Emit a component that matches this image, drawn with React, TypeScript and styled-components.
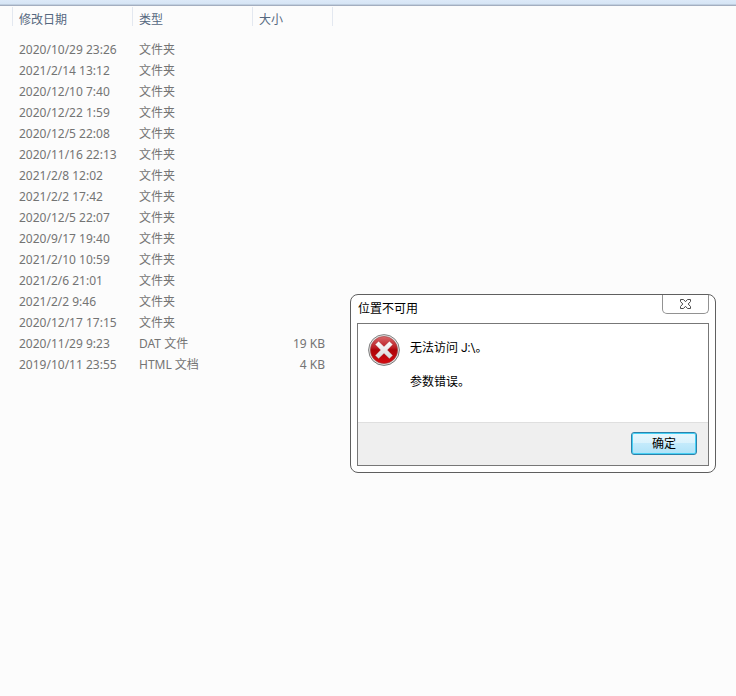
import React from "react";
import styled, { createGlobalStyle } from "styled-components";

const GlobalStyle = createGlobalStyle`
  * { box-sizing: border-box; }
  body {
    margin: 0;
    background: #fcfcfc;
    font-family: "Noto Sans", "Noto Sans CJK SC", sans-serif;
    font-size: 12px;
  }
`;

const Page = styled.div`
  position: relative;
  min-height: 100vh;
  background: #fcfcfc;
`;

const CommandBarEdge = styled.div`
  height: 6px;
  background: linear-gradient(#dce9f8, #d6e5f5 4px, #c0cfe0 4px, #c0cfe0 5px, #a3aec0 5px);
`;

const ListArea = styled.main`
  padding: 1px 0 0 12px;
`;

const FileTable = styled.table`
  width: 321px;
  table-layout: fixed;
  border-collapse: separate;
  border-spacing: 0;
  color: #747474;

  tbody::before {
    content: "";
    display: block;
    height: 13px;
  }
`;

const HeaderCell = styled.th<{ $width: number; $last?: boolean }>`
  width: ${(p) => p.$width}px;
  height: 19px;
  padding: 4px 6px 0;
  border-left: 1px solid #e3e8f0;
  border-right: ${(p) => (p.$last ? "1px solid #e3e8f0" : "0")};
  color: #56687f;
  font-weight: 400;
  line-height: 15px;
  text-align: left;
  vertical-align: bottom;

  span {
    display: block;
    height: 14px;
  }
`;

const Cell = styled.td<{ $align?: "right" }>`
  height: 21px;
  padding: 0 8px 0 7px;
  line-height: 21px;
  text-align: ${(p) => p.$align ?? "left"};
  white-space: nowrap;
`;

const Dialog = styled.section`
  position: absolute;
  top: 294px;
  left: 350px;
  right: 20px;
  min-width: 240px;
  padding: 0 6px 6px;
  border: 1px solid #5f5f5f;
  border-radius: 8px;
  background: #fff;
  color: #000;
  font-family: Roboto, "Noto Sans CJK SC", sans-serif;
`;

const TitleBar = styled.header`
  display: flex;
  justify-content: space-between;
  align-items: flex-start;
  height: 28px;
`;

const Title = styled.h1`
  margin: 0;
  padding: 0 1px;
  font-size: 12px;
  font-weight: 400;
  line-height: 28px;
`;

const CloseButton = styled.button`
  display: flex;
  align-items: center;
  justify-content: center;
  width: 47px;
  height: 19px;
  padding: 0;
  border: 1px solid #929292;
  border-top: 0;
  border-radius: 0 0 5px 5px;
  background: #fff;
`;

const Panel = styled.div`
  border: 1px solid #777;
`;

const Message = styled.div`
  display: flex;
  gap: 10px;
  min-height: 98px;
  padding: 10px;
`;

const MessageText = styled.div`
  padding-top: 6px;

  p {
    margin: 0 0 17px;
    line-height: 17px;
  }
`;

const Footer = styled.footer`
  display: flex;
  justify-content: flex-end;
  height: 43px;
  padding: 9px 11px;
  border-top: 1px solid #dfdfdf;
  background: #efefef;
`;

const OkButton = styled.button`
  width: 66px;
  height: 23px;
  padding: 2px 0 0;
  border: 1px solid #2d82aa;
  border-radius: 3px;
  background: linear-gradient(#e9f7fd, #d9f2fc 50%, #c3eafb 50%, #b0e3f8);
  box-shadow: inset 0 0 0 1px #45d0f5;
  color: #000;
  font: inherit;
  line-height: 19px;
`;

const ErrorIcon = () => (
  <svg width="32" height="32" viewBox="0 0 32 32" aria-hidden="true">
    <defs>
      <linearGradient id="rim" x1="0" y1="0" x2="0" y2="1">
        <stop offset="0" stopColor="#858585" />
        <stop offset="1" stopColor="#777" />
      </linearGradient>
      <linearGradient id="red" x1="0" y1="0" x2="0" y2="1">
        <stop offset="0" stopColor="#d9686a" />
        <stop offset="0.4" stopColor="#bd2026" />
        <stop offset="0.5" stopColor="#ad0308" />
        <stop offset="1" stopColor="#d50b10" />
      </linearGradient>
      <linearGradient id="cross" x1="0" y1="0" x2="0" y2="1">
        <stop offset="0" stopColor="#fff" />
        <stop offset="1" stopColor="#d6d6d6" />
      </linearGradient>
    </defs>
    <circle cx="16" cy="16" r="15.4" fill="#e4e2e2" stroke="url(#rim)" />
    <circle cx="16" cy="16" r="13.6" fill="url(#red)" stroke="#9c3a3c" strokeWidth="0.6" />
    <path
      d="M10.6 7.2 16 12.5l5.4-5.3 3.4 3.4L19.5 16l5.3 5.4-3.4 3.4L16 19.5l-5.4 5.3-3.4-3.4L12.5 16l-5.3-5.4z"
      fill="url(#cross)"
      stroke="#8f1518"
      strokeWidth="0.3"
      strokeLinejoin="round"
    />
  </svg>
);

const CloseIcon = () => (
  <svg width="13" height="12" viewBox="0 0 13 12" aria-hidden="true">
    <path
      d="M1.5 1.5h3L6.5 3.7l2-2.2h3v2L9.2 6l2.3 2.5v2h-3l-2-2.2-2 2.2h-3v-2L3.8 6 1.5 3.5z"
      fill="#fff"
      stroke="#4c4c4c"
      strokeLinejoin="round"
    />
  </svg>
);

type FileRow = { modified: string; type: string; size?: string };

const folder = (modified: string): FileRow => ({ modified, type: "文件夹" });

const files: FileRow[] = [
  ...[
    "2020/10/29 23:26",
    "2021/2/14 13:12",
    "2020/12/10 7:40",
    "2020/12/22 1:59",
    "2020/12/5 22:08",
    "2020/11/16 22:13",
    "2021/2/8 12:02",
    "2021/2/2 17:42",
    "2020/12/5 22:07",
    "2020/9/17 19:40",
    "2021/2/10 10:59",
    "2021/2/6 21:01",
    "2021/2/2 9:46",
    "2020/12/17 17:15",
  ].map(folder),
  { modified: "2020/11/29 9:23", type: "DAT 文件", size: "19 KB" },
  { modified: "2019/10/11 23:55", type: "HTML 文档", size: "4 KB" },
];

export default function App() {
  return (
    <Page lang="zh-CN">
      <GlobalStyle />
      <CommandBarEdge />
      <ListArea>
        <FileTable>
          <thead>
            <tr>
              <HeaderCell $width={120}><span>修改日期</span></HeaderCell>
              <HeaderCell $width={120}><span>类型</span></HeaderCell>
              <HeaderCell $width={81} $last><span>大小</span></HeaderCell>
            </tr>
          </thead>
          <tbody>
            {files.map((file) => (
              <tr key={file.modified}>
                <Cell>{file.modified}</Cell>
                <Cell>{file.type}</Cell>
                <Cell $align="right">{file.size}</Cell>
              </tr>
            ))}
          </tbody>
        </FileTable>
      </ListArea>
      <Dialog role="alertdialog" aria-labelledby="dialog-title" aria-describedby="dialog-text">
        <TitleBar>
          <Title id="dialog-title">位置不可用</Title>
          <CloseButton type="button" aria-label="关闭">
            <CloseIcon />
          </CloseButton>
        </TitleBar>
        <Panel>
          <Message>
            <ErrorIcon />
            <MessageText id="dialog-text">
              <p>无法访问 J:\。</p>
              <p>参数错误。</p>
            </MessageText>
          </Message>
          <Footer>
            <OkButton type="button">确定</OkButton>
          </Footer>
        </Panel>
      </Dialog>
    </Page>
  );
}
